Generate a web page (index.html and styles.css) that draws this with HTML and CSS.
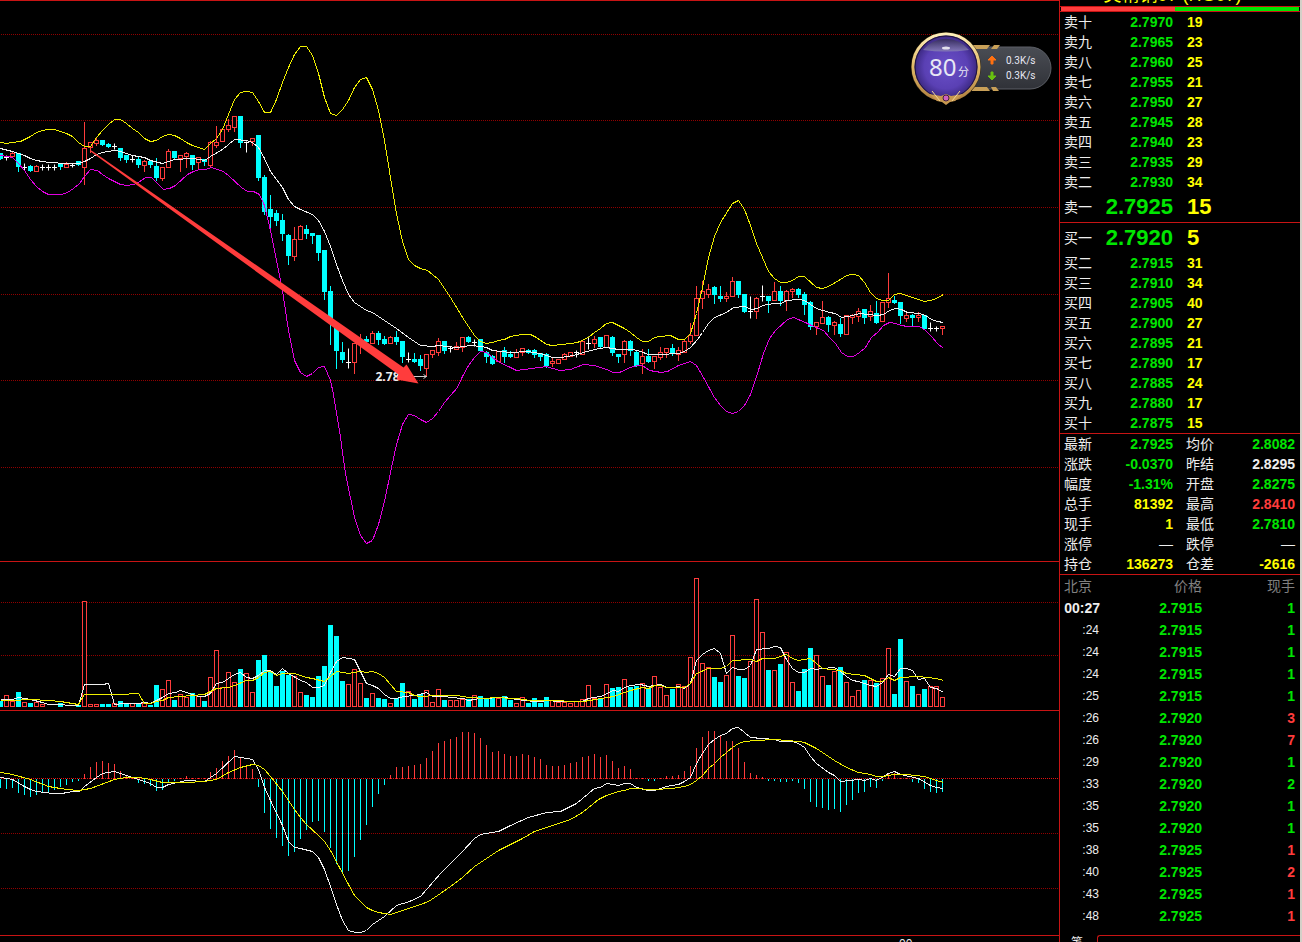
FILE: index.html
```html
<!DOCTYPE html>
<html lang="zh-CN">
    <head>
        <meta charset="UTF-8" />
        <meta name="viewport" content="width=device-width, initial-scale=1.0" />
        <title>美精铜07 (HG07)</title>
        <link rel="stylesheet" href="styles.css">
    </head>
    <body>
        <main class="charts">
            <svg class="panel price-panel" id="price"></svg>
            <svg class="panel volume-panel" id="volume"></svg>
            <svg class="panel macd-panel" id="macd"></svg>
            <div class="axis"><span>00</span></div>

            <div class="speed">
                <svg width="144" height="76" viewBox="0 0 144 76">
                    <defs>
                        <radialGradient id="orb" cx="50%" cy="50%" r="55%">
                            <stop offset="0" stop-color="#6a50c8" />
                            <stop offset="0.6" stop-color="#5a40b4" />
                            <stop offset="1" stop-color="#2c1c68" />
                        </radialGradient>
                        <linearGradient id="shine" x1="0" y1="0" x2="0" y2="1">
                            <stop offset="0" stop-color="#302a50" />
                            <stop offset="1" stop-color="#8c84b8" />
                        </linearGradient>
                        <linearGradient id="gold" x1="0" y1="0" x2="0" y2="1">
                            <stop offset="0" stop-color="#fff0b8" />
                            <stop offset="0.5" stop-color="#e0b864" />
                            <stop offset="1" stop-color="#b08040" />
                        </linearGradient>
                        <linearGradient id="pill" x1="0" y1="0" x2="0" y2="1">
                            <stop offset="0" stop-color="#4a4d54" />
                            <stop offset="1" stop-color="#303238" />
                        </linearGradient>
                    </defs>
                    <path d="M60 17H120a21 21 0 0 1 0 42H60z" fill="url(#pill)" stroke="#5c5f66" />
                    <path d="M62 15h18l-3 4H62zM84 15h6l-3 4h-6zM62 57h15l3 4H62zM81 57h5l3 4h-6z" fill="#c8a058" />
                    <circle cx="36" cy="37" r="35" fill="#3a2c14" />
                    <circle cx="36" cy="37" r="33" fill="url(#orb)" stroke="url(#gold)" stroke-width="3" />
                    <circle cx="36" cy="37" r="31" fill="none" stroke="#20143c" stroke-width="1" />
                    <path d="M13 20a29 29 0 0 1 46 0q-23 3-46 0z" fill="url(#shine)" opacity="0.8" />
                    <ellipse cx="36" cy="18" rx="4" ry="1.5" fill="#fff" opacity="0.8" />
                    <path d="M19 64l12 2 5-2 5 2 12-2-8 7-5 1-4 3-4-3-5-1z" fill="#c89850" />
                    <path d="M22 61l8 10M50 61l-8 10" stroke="#f4d890" />
                    <circle cx="36" cy="68" r="3" fill="#d060c0" stroke="#402040" />
                    <path d="M82 26l4 4h-3v4h-2v-4h-3z" fill="#ff7010" stroke="#ff7010" />
                    <path d="M82 50l-4-4h3v-4h2v4h3z" fill="#68c010" stroke="#68c010" />
                    <text class="score" x="19" y="46">80</text>
                    <text class="unit" x="48" y="46">分</text>
                    <text class="rate" x="96" y="34">0.3K/s</text>
                    <text class="rate" x="96" y="49">0.3K/s</text>
                </svg>
            </div>
        </main>

        <aside class="quote">
            <h1 class="title">美精铜07 (HG07)</h1>
            <div class="ratio"><span class="ratio-buy"></span></div>

            <table class="book">
                <tr><th>卖十</th><td>2.7970</td><td>19</td></tr>
                <tr><th>卖九</th><td>2.7965</td><td>23</td></tr>
                <tr><th>卖八</th><td>2.7960</td><td>25</td></tr>
                <tr><th>卖七</th><td>2.7955</td><td>21</td></tr>
                <tr><th>卖六</th><td>2.7950</td><td>27</td></tr>
                <tr><th>卖五</th><td>2.7945</td><td>28</td></tr>
                <tr><th>卖四</th><td>2.7940</td><td>23</td></tr>
                <tr><th>卖三</th><td>2.7935</td><td>29</td></tr>
                <tr><th>卖二</th><td>2.7930</td><td>34</td></tr>
                <tr class="best"><th>卖一</th><td>2.7925</td><td>15</td></tr>
            </table>

            <table class="book">
                <tr class="best"><th>买一</th><td>2.7920</td><td>5</td></tr>
                <tr><th>买二</th><td>2.7915</td><td>31</td></tr>
                <tr><th>买三</th><td>2.7910</td><td>34</td></tr>
                <tr><th>买四</th><td>2.7905</td><td>40</td></tr>
                <tr><th>买五</th><td>2.7900</td><td>27</td></tr>
                <tr><th>买六</th><td>2.7895</td><td>21</td></tr>
                <tr><th>买七</th><td>2.7890</td><td>17</td></tr>
                <tr><th>买八</th><td>2.7885</td><td>24</td></tr>
                <tr><th>买九</th><td>2.7880</td><td>17</td></tr>
                <tr><th>买十</th><td>2.7875</td><td>15</td></tr>
            </table>

            <table class="stats">
                <tr><th>最新</th><td class="down">2.7925</td><th>均价</th><td class="down">2.8082</td></tr>
                <tr><th>涨跌</th><td class="down">-0.0370</td><th>昨结</th><td>2.8295</td></tr>
                <tr><th>幅度</th><td class="down">-1.31%</td><th>开盘</th><td class="down">2.8275</td></tr>
                <tr><th>总手</th><td class="count">81392</td><th>最高</th><td class="up">2.8410</td></tr>
                <tr><th>现手</th><td class="count">1</td><th>最低</th><td class="down">2.7810</td></tr>
                <tr><th>涨停</th><td class="none">—</td><th>跌停</th><td class="none">—</td></tr>
                <tr><th>持仓</th><td class="count">136273</td><th>仓差</th><td class="count">-2616</td></tr>
            </table>

            <table class="ticks">
                <tr><th>北京</th><th>价格</th><th>现手</th></tr>
                <tr><td class="full">00:27</td><td>2.7915</td><td class="down">1</td></tr>
                <tr><td>:24</td><td>2.7915</td><td class="down">1</td></tr>
                <tr><td>:24</td><td>2.7915</td><td class="down">1</td></tr>
                <tr><td>:24</td><td>2.7915</td><td class="down">1</td></tr>
                <tr><td>:25</td><td>2.7915</td><td class="down">1</td></tr>
                <tr><td>:26</td><td>2.7920</td><td class="up">3</td></tr>
                <tr><td>:26</td><td>2.7920</td><td class="up">7</td></tr>
                <tr><td>:29</td><td>2.7920</td><td class="down">1</td></tr>
                <tr><td>:33</td><td>2.7920</td><td class="down">2</td></tr>
                <tr><td>:35</td><td>2.7920</td><td class="down">1</td></tr>
                <tr><td>:35</td><td>2.7920</td><td class="down">1</td></tr>
                <tr><td>:38</td><td>2.7925</td><td class="up">1</td></tr>
                <tr><td>:40</td><td>2.7925</td><td class="up">2</td></tr>
                <tr><td>:43</td><td>2.7925</td><td class="up">1</td></tr>
                <tr><td>:48</td><td>2.7925</td><td class="up">1</td></tr>
            </table>

            <div class="tabs"><span class="tab">笔</span><span class="tab-rest"></span></div>
        </aside>

        <script src="chart.js"></script>
    </body>
</html>
```

FILE: styles.css
```css
body,
html {
    margin: 0;
    padding: 0;
    height: 100%;
    overflow: hidden;
}

body {
    display: flex;
    background: #000;
    color: #eee;
    font-family: "Liberation Sans", "Noto Sans CJK SC", sans-serif;
    font-size: 14px;
}

/* charts */
.charts {
    position: relative;
    flex: 1;
    min-width: 0;
    overflow: hidden;
}

.panel {
    display: block;
    width: 100%;
    box-sizing: border-box;
    border-top: 1px solid #c81414;
}

.price-panel {
    height: 561px;
}

.volume-panel {
    height: 149px;
}

.macd-panel {
    height: 225px;
}

.panel line,
.panel rect,
.panel polyline {
    shape-rendering: crispEdges;
    fill: none;
    stroke-width: 1;
}

.panel .grid,
.panel .zero {
    shape-rendering: auto;
    stroke: #900000;
    stroke-dasharray: 1 1;
}

.panel .zero {
    stroke: #e01010;
}

.panel .rise {
    stroke: #ff3c3c;
}

.panel .hollow {
    fill: #000;
}

.panel .fall {
    stroke: #00ffff;
}

.panel .solid {
    fill: #00ffff;
}

.panel .flat {
    stroke: #fff;
}

.panel .white {
    stroke: #f0f0f0;
}

.panel .yellow {
    stroke: #f0f000;
}

.panel .magenta {
    stroke: #e000e0;
}

.low-mark {
    fill: #eee;
    font: bold 12px "Open Sans", sans-serif;
}

.low-arrow {
    fill: none;
    stroke: #ccc;
}

.trend {
    fill: #ff3c3c;
}

.axis {
    border-top: 1px solid #c81414;
    padding: 1px 0 0 899px;
    font-size: 12px;
    line-height: 14px;
}

/* speed ball */
.speed {
    position: absolute;
    left: 910px;
    top: 30px;
}

.speed svg {
    display: block;
}

.speed text {
    fill: #e8e8f4;
    font-family: "Noto Sans", "Noto Sans CJK SC", sans-serif;
}

.speed .score {
    font-size: 24px;
}

.speed .unit {
    font-size: 11px;
}

.speed .rate {
    font-family: Roboto, sans-serif;
    font-size: 10px;
}

/* quote column */
.quote {
    flex: none;
    width: 240px;
    border-left: 1px solid #c81414;
    border-right: 2px solid #d4d0c8;
}

.title {
    display: flex;
    align-items: flex-end;
    justify-content: center;
    height: 6px;
    margin: 0;
    padding-right: 15px;
    overflow: hidden;
    color: #ffff00;
    font-size: 18px;
    font-weight: normal;
    line-height: 22px;
    white-space: nowrap;
}

.ratio {
    height: 4px;
    padding: 0 1px;
    border-top: 1px solid #c81414;
    border-bottom: 1px solid #c81414;
    background: #00e600 content-box;
}

.ratio-buy {
    display: block;
    width: 48%;
    height: 4px;
    background: #ff3c3c;
}

table {
    width: 100%;
    table-layout: fixed;
    border-collapse: collapse;
    border-bottom: 1px solid #c81414;
}

th,
td {
    height: 20px;
    padding: 0;
    line-height: 20px;
    text-align: right;
    white-space: nowrap;
}

th {
    font-weight: normal;
}

td {
    font-weight: bold;
}

.book th,
.stats th {
    width: 41px;
    padding-left: 4px;
    text-align: left;
}

.book td:nth-child(2),
.stats td:nth-child(2) {
    width: 68px;
}

.book td {
    color: #00e600;
}

.book td:last-child {
    padding-left: 14px;
    color: #ffff00;
    text-align: left;
}

.best th,
.best td {
    height: 30px;
    line-height: 30px;
}

.best td {
    font-size: 22px;
}

.stats th:nth-child(3) {
    padding-left: 13px;
}

.stats td:last-child,
.ticks th:last-child,
.ticks td:last-child {
    padding-right: 5px;
}

td.none {
    font-weight: normal;
}

.ticks {
    border-bottom: 0;
}

.ticks th,
.ticks td {
    height: 22px;
    line-height: 22px;
}

.ticks th {
    color: #808080;
}

.ticks th:first-child {
    width: 36px;
    padding-left: 4px;
    text-align: left;
}

.ticks th:nth-child(2) {
    width: 102px;
}

.ticks td:nth-child(2) {
    color: #00e600;
}

.ticks td:first-child {
    padding-right: 1px;
    font-size: 12px;
    font-weight: normal;
}

.ticks td.full {
    padding-right: 0;
    font-size: 14px;
    font-weight: bold;
}

.stats .down,
.ticks .down {
    color: #00e600;
}

.stats .up,
.ticks .up {
    color: #ff3c3c;
}

.stats .count {
    color: #ffff00;
}

.tabs {
    display: flex;
    margin-top: 8px;
    font-size: 12px;
    line-height: 17px;
}

.tab {
    width: 26px;
    padding-left: 11px;
}

.tab-rest {
    flex: 1;
    border-top: 1px solid #c81414;
    border-left: 1px solid #c81414;
    border-top-left-radius: 3px;
}
```

FILE: chart.js
```js
const STEP = 6;

// kind, high, body top, body bottom, low (c = fall, r = rise, w = flat)
const candles = `
c 153 153 159 159|w 155 157 157 160|r 151 153 156 156|c 153 153 167 171|w 163 167 167 170|c 164 166 171 171
r 164 166 171 171|w 164 167 167 170|w 164 167 167 170|w 164 167 167 170|c 164 164 167 169|r 161 164 167 167
w 163 165 165 167|c 161 161 165 165|r 121 148 167 184|r 142 142 147 152|r 137 140 143 145|c 140 140 145 145
c 142 144 147 147|w 143 146 146 149|c 148 148 158 160|c 155 155 160 162|w 155 159 159 162|c 155 159 165 167
r 159 161 165 171|c 160 161 165 167|c 157 166 178 180|r 167 167 178 180|r 148 151 167 167|c 151 151 158 159
r 155 155 158 171|r 151 153 156 167|c 155 155 165 169|r 157 157 162 169|c 159 159 162 165|r 140 142 165 167
r 125 142 145 147|r 127 129 141 141|r 118 125 129 131|r 116 116 127 131|c 116 116 143 147|w 141 142 142 152
r 138 138 141 145|c 135 135 178 180|c 174 177 212 214|c 194 209 217 229|c 209 213 221 225|c 213 220 234 240
c 233 235 256 264|r 226 239 256 260|r 224 226 239 239|c 224 229 234 238|c 233 233 236 243|c 235 235 253 260
c 250 250 292 299|c 285 291 323 344|c 323 323 351 368|c 341 352 360 362|w 348 362 362 368|r 343 343 362 373
r 333 340 343 353|c 335 339 342 344|r 330 333 343 343|c 330 333 340 344|c 335 339 344 344|r 335 337 343 343
c 330 337 342 344|c 341 341 357 362|w 352 359 359 362|c 352 359 362 362|c 354 359 366 370|r 354 354 368 376
r 350 350 354 357|r 337 341 352 355|c 341 341 351 353|w 346 348 348 352|r 341 346 349 349|r 337 337 347 351
c 335 337 342 342|w 339 342 342 346|c 339 339 351 351|c 350 352 357 362|c 354 356 364 364|r 351 351 361 361
c 346 350 357 362|c 350 354 357 357|r 348 352 357 357|r 348 348 352 355|c 348 350 353 353|c 348 350 355 357
c 353 353 357 360|c 352 354 366 367|r 357 361 363 366|r 359 359 363 363|r 352 354 359 359|r 352 352 356 356
w 350 352 352 357|r 341 341 354 354|w 336 343 343 349|r 335 339 343 347|c 337 337 347 347|r 335 335 347 347
c 335 337 353 355|c 354 354 357 362|r 339 341 354 362|c 339 341 351 355|c 350 352 366 366|r 348 356 363 373
c 348 356 362 362|r 356 356 361 368|r 346 352 357 359|r 348 348 352 357|c 343 348 353 355|r 346 350 354 360
r 339 341 352 352|r 322 335 341 343|r 285 298 335 335|r 280 291 298 308|r 283 289 294 297|c 285 287 295 303
c 285 296 299 301|r 291 296 298 301|r 276 281 296 296|c 281 281 295 297|c 294 294 312 312|w 296 311 311 318
r 296 298 311 318|w 285 296 296 301|c 296 296 301 312|r 281 291 300 300|c 285 291 301 305|r 289 291 300 310
r 287 289 291 297|c 287 289 295 297|c 291 294 305 314|c 300 302 327 329|r 322 322 326 334|r 300 317 323 323
c 315 317 325 331|r 320 322 325 334|c 317 324 334 336|r 315 315 334 334|r 313 315 317 323|r 307 311 316 321
c 309 309 318 323|r 304 311 316 320|c 300 313 323 323|r 302 302 321 321|r 272 298 302 307|c 295 300 303 303
c 302 302 316 323|r 311 315 318 321|c 313 315 318 326|r 311 315 317 321|c 315 315 329 329|w 322 328 328 331
w 326 328 328 331|r 326 326 328 334`
    .trim()
    .split(/[|\n]/)
    .map((row) => {
        const [kind, ...y] = row.split(" ");
        return [kind, ...y.map(Number)];
    });

const volumes = [
    701, 695, 701, 692, 702, 703, 702, 704, 706, 706, 703, 706, 706, 705, 601, 704,
    704, 704, 704, 703, 701, 703, 703, 703, 703, 705, 685, 689, 680, 700, 694, 697,
    693, 696, 701, 677, 650, 687, 672, 682, 669, 673, 692, 660, 655, 671, 686, 671,
    675, 676, 692, 695, 697, 676, 666, 625, 636, 681, 684, 669, 683, 698, 693, 698,
    699, 703, 698, 683, 691, 699, 694, 690, 702, 689, 700, 700, 700, 699, 699, 695,
    696, 699, 698, 698, 696, 700, 703, 697, 703, 698, 703, 697, 700, 702, 702, 703,
    701, 699, 685, 698, 698, 684, 688, 687, 679, 687, 686, 683, 688, 676, 687, 695,
    689, 684, 686, 657, 578, 663, 667, 677, 682, 675, 635, 676, 678, 661, 599, 632,
    670, 670, 664, 652, 682, 691, 669, 648, 655, 676, 685, 671, 667, 682, 696, 690,
    680, 680, 683, 678, 648, 694, 639, 681, 686, 694, 689, 686, 686, 697,
];

const macdBars = [
    787, 788, 787, 792, 794, 796, 794, 792, 791, 789, 786, 784, 781, 780, 773, 766,
    761, 760, 762, 763, 770, 775, 777, 782, 783, 785, 790, 789, 781, 780, 777, 775,
    777, 777, 777, 771, 767, 760, 755, 749, 757, 765, 768, 786, 812, 828, 837, 845,
    855, 851, 838, 829, 821, 820, 831, 847, 863, 872, 870, 856, 839, 824, 806, 793,
    784, 774, 766, 766, 765, 764, 763, 757, 750, 742, 740, 738, 736, 731, 731, 732,
    737, 744, 751, 750, 753, 755, 755, 753, 754, 756, 758, 764, 765, 765, 764, 762,
    761, 756, 755, 753, 756, 754, 760, 767, 765, 768, 777, 777, 780, 780, 777, 775,
    775, 774, 770, 765, 747, 736, 730, 730, 735, 740, 740, 747, 761, 772, 774, 776,
    780, 780, 781, 781, 780, 782, 788, 801, 806, 807, 809, 808, 811, 804, 799, 792,
    791, 786, 787, 780, 773, 772, 777, 777, 781, 782, 788, 791, 792, 791,
];

const upper = "0,142 6,143 12,142 20,141 24,139 30,136 36,132 42,130 48,129 54,129 60,131 66,133 72,136 78,142 84,146 90,146 96,137 102,130 108,124 114,119 120,119 126,123 132,128 138,132 144,138 150,141 156,140 162,136 168,134 174,135 180,138 186,142 192,145 198,147 204,149 210,143 216,138 222,129 228,114 234,99 240,92 246,91 252,92 258,101 264,112 270,112 276,99 282,82 288,67 294,54 300,46 306,46 312,55 318,73 324,97 330,113 336,115 342,109 348,100 354,87 360,79 366,77 372,89 378,110 384,140 390,177 396,213 402,241 408,259 414,265 420,268 427,270 432,274 438,279 444,288 450,297 464,320 474,335 480,341 486,343 492,342 498,340 504,339 510,336 522,334 530,334 536,337 546,344 552,345 570,343 577,342 588,337 594,332 600,328 606,323 612,322 618,325 624,328 630,332 636,337 642,341 648,341 654,337 660,336 670,335 678,339 684,339 690,333 696,313 702,287 708,257 714,236 720,222 732,203 738,200 744,209 750,225 756,243 762,257 768,271 774,278 780,282 786,282 792,280 798,276 804,276 816,287 822,288 828,286 840,279 846,275 852,274 858,275 864,282 870,292 876,298 882,300 888,300 894,294 900,293 906,295 924,301 930,300 936,298 943,294";
const middle = "0,148 12,151 24,155 30,158 36,160 48,162 66,163 78,163 84,161 90,158 96,154 102,152 114,150 120,151 132,155 144,157 150,160 162,163 168,161 174,159 192,158 204,160 210,156 222,149 228,144 234,139 246,140 252,142 258,147 264,158 270,171 282,187 288,199 294,206 300,209 312,214 318,220 324,231 330,246 336,264 342,280 348,294 354,302 366,310 372,312 396,328 408,337 420,345 432,346 438,345 456,347 470,345 480,346 486,347 492,350 510,352 527,351 540,353 552,357 560,357 573,355 583,352 594,349 606,347 618,349 633,349 640,351 648,354 660,354 678,353 684,351 690,347 697,339 702,332 708,323 714,317 726,312 733,307 744,306 751,309 757,308 762,305 774,303 781,303 786,300 798,299 804,300 810,304 816,308 829,312 835,313 841,317 852,315 859,313 877,315 883,314 889,310 895,308 901,309 907,312 919,313 925,315 931,319 937,321 943,322";
const lower = "0,155 12,157 18,163 24,170 30,179 36,186 42,191 48,194 55,194 61,194 67,192 73,188 79,183 84,176 90,169 97,170 102,174 108,178 114,181 120,184 127,185 133,184 138,182 145,177 151,177 157,183 163,189 169,188 175,185 187,174 193,171 199,169 205,169 211,167 223,171 229,176 241,187 247,191 253,191 259,194 264,205 270,230 276,260 282,290 288,330 294,360 300,372 306,376 312,373 318,367 324,366 330,380 333,394 339,430 345,473 354,517 360,535 366,543 372,540 378,524 384,501 390,472 396,444 402,424 408,414 414,415 420,419 426,422 432,418 438,411 444,402 457,387 462,376 468,365 474,357 480,351 486,352 492,357 499,362 510,367 516,370 546,366 559,370 570,369 583,364 594,365 606,369 613,372 619,372 630,367 637,365 642,365 649,370 661,372 667,371 678,365 690,361 696,365 703,377 709,388 714,397 720,405 726,411 732,413 738,411 744,405 750,394 757,373 763,353 769,338 775,330 787,319 793,317 805,322 811,325 823,330 829,337 835,343 841,352 847,356 853,356 859,352 865,347 871,337 877,332 883,325 889,322 895,323 901,325 907,326 919,326 925,330 931,336 937,343 943,348";

const volumeFast = "0,699 12,699 18,697 30,699 42,702 48,704 62,704 67,705 78,705 84,684 102,684 108,683 114,704 123,703 138,703 144,702 150,703 162,697 168,693 175,692 180,690 192,694 198,696 204,696 210,693 216,683 222,682 228,678 234,674 240,672 246,677 252,678 258,675 264,670 270,670 276,674 282,668 288,673 300,680 306,682 312,687 318,687 324,685 330,672 336,661 342,657 354,659 360,671 366,683 372,685 378,688 384,694 390,698 396,698 403,696 415,695 426,692 432,696 444,696 450,697 463,698 468,700 480,698 504,697 516,699 534,701 541,701 546,700 558,701 582,701 588,698 600,696 607,693 612,690 618,691 624,687 630,685 640,684 648,686 660,684 666,687 673,687 678,686 684,688 690,683 696,660 702,654 708,650 714,648 720,653 726,673 732,667 738,669 744,669 750,665 756,649 768,648 774,646 780,647 786,659 792,668 798,672 804,672 810,668 816,669 822,668 834,667 840,671 846,676 852,680 858,681 864,683 870,685 876,686 882,682 888,674 894,676 900,668 906,668 912,670 918,679 924,678 930,687 936,688 943,692";
const volumeSlow = "0,700 12,700 30,699 48,700 60,701 78,704 84,694 120,694 138,693 144,703 150,703 156,701 162,700 168,697 180,696 192,695 204,694 216,688 228,687 234,685 246,680 252,680 258,677 264,672 270,671 276,675 282,673 294,673 306,677 312,678 324,681 330,676 336,671 348,673 360,671 366,672 372,671 378,673 384,677 396,691 408,692 414,695 420,696 436,695 456,695 468,697 486,698 493,697 516,698 530,700 553,700 573,701 583,701 607,697 613,696 630,690 642,687 648,688 654,685 660,685 666,687 684,687 690,683 696,673 708,668 720,668 726,666 732,660 750,659 756,661 762,658 774,658 786,654 792,658 798,660 810,658 816,663 822,668 840,670 846,673 864,675 876,681 882,681 888,677 894,680 900,677 918,676 936,678 943,680";

const dif = "0,777 12,779 24,786 30,789 36,791 53,793 61,793 73,791 79,791 84,786 96,777 102,773 114,771 120,773 138,779 150,783 156,787 162,787 168,784 186,780 204,781 210,777 216,773 234,756 252,759 258,769 264,787 270,800 282,825 288,841 294,847 300,848 312,851 318,857 324,869 330,886 336,904 342,920 348,930 355,932 360,932 366,930 372,924 384,916 396,905 409,901 420,896 440,873 450,863 462,851 474,838 480,834 498,831 510,825 528,817 546,812 560,811 576,803 588,793 594,788 600,787 606,783 618,785 624,783 630,783 636,787 648,790 654,790 666,786 678,784 684,781 690,777 696,763 702,753 708,744 714,739 720,735 726,733 732,728 738,727 744,732 750,737 774,739 780,741 792,741 798,743 804,747 810,756 816,763 828,772 834,775 840,781 858,779 864,780 870,778 876,780 888,773 894,771 900,774 918,778 930,785 936,787 943,788";
const dea = "0,772 12,774 30,779 48,786 66,789 78,790 90,788 114,779 126,777 138,777 150,779 162,782 186,782 204,781 216,779 228,772 240,767 252,764 258,765 264,769 270,776 282,791 294,809 300,817 306,824 318,835 324,841 330,850 348,884 354,895 366,907 372,910 378,912 390,914 402,910 420,904 428,901 440,893 450,886 462,877 474,866 486,858 498,850 510,844 522,838 534,831 546,827 558,823 570,819 582,812 598,799 606,795 618,791 624,790 630,788 654,789 672,788 684,786 690,784 696,780 702,775 708,768 714,763 720,757 726,752 732,747 738,743 744,741 756,740 774,739 798,741 804,742 816,748 834,760 846,767 858,772 870,774 876,776 882,776 894,774 906,774 924,776 936,780 943,782";

// Start half a pixel in so that each dot fills one whole pixel
function hline(y, cls) {
    return `<line class="${cls}" x1="0.5" y1="${y}" x2="100%" y2="${y}" />`;
}

function curve(points, cls) {
    return `<polyline class="${cls}" points="${points}" />`;
}

// Every panel shares one y scale, so shift it up by the panel's own top
function draw(id, top, shapes) {
    document.getElementById(id).innerHTML =
        `<g transform="translate(0.5 ${0.5 - top})">${shapes.join("")}</g>`;
}

function candle([kind, high, top, bottom, low], i) {
    const x = i * STEP;
    if (kind === "w") {
        return `<path class="flat" d="M${x} ${high}V${low}M${x - 2.5} ${top}h5" />`;
    }
    if (kind === "c") {
        return `<line class="fall" x1="${x}" y1="${high}" x2="${x}" y2="${low}" />
            <rect class="fall solid" x="${x - 2}" y="${top}" width="4" height="${bottom - top - 1}" />`;
    }
    return `<line class="rise" x1="${x}" y1="${high}" x2="${x}" y2="${low}" />
        <rect class="rise hollow" x="${x - 2}" y="${top}" width="4" height="${bottom - top}" />`;
}

function volumeBar(y, i) {
    const cls = candles[i][0] === "c" ? "fall solid" : "rise hollow";
    return `<rect class="${cls}" x="${i * STEP - 2}" y="${y}" width="4" height="${706 - y}" />`;
}

function macdBar(y, i) {
    const cls = y > 778 ? "fall" : "rise";
    return `<line class="${cls}" x1="${i * STEP}" y1="778" x2="${i * STEP}" y2="${y}" />`;
}

draw("price", 1, [
    ...[34, 120, 207, 294, 380, 467].map((y) => hline(y, "grid")),
    ...candles.map(candle),
    curve(upper, "yellow"),
    curve(middle, "white"),
    curve(lower, "magenta"),
    `<text class="low-mark" x="375" y="380">2.78</text>`,
    `<path class="low-arrow" d="M413 376H426M423 374l3 2l-3 2" />`,
    `<path class="trend" d="M91 150L403 367L406 364L418 383L396 379L398 374L90 151z" />`,
]);

draw("volume", 562, [
    hline(602, "grid"),
    hline(655, "grid"),
    ...volumes.map(volumeBar),
    curve(volumeFast, "white"),
    curve(volumeSlow, "yellow"),
]);

draw("macd", 711, [
    hline(778, "zero"),
    hline(833, "grid"),
    hline(888, "grid"),
    ...macdBars.map(macdBar),
    curve(dif, "white"),
    curve(dea, "yellow"),
]);
```
